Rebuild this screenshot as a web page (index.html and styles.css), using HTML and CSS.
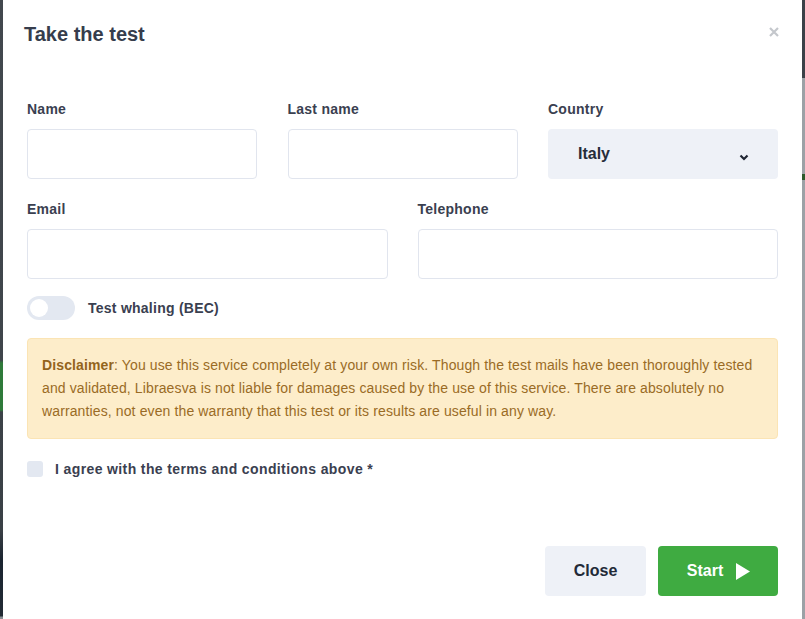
FILE: index.html
```html
<!DOCTYPE html>
<html lang="en">
<head>
<meta charset="utf-8">
<title>Take the test</title>
<link rel="stylesheet" href="styles.css">
</head>
<body>
<div class="backdrop">
  <div class="modal">
    <div class="modal-header">
      <h2 class="modal-title">Take the test</h2>
      <button class="modal-close" type="button" aria-label="Close">
        <svg width="10" height="10" viewBox="0 0 10 10"><path d="M1 1 L9 9 M9 1 L1 9" stroke="#c4c7cc" stroke-width="2.2" stroke-linecap="butt"/></svg>
      </button>
    </div>
    <form class="modal-body">
      <div class="row row-3">
        <div class="field">
          <label class="label">Name</label>
          <input class="input" type="text">
        </div>
        <div class="field">
          <label class="label">Last name</label>
          <input class="input" type="text">
        </div>
        <div class="field">
          <label class="label">Country</label>
          <div class="select">
            <span class="select-value">Italy</span>
            <svg class="chevron" width="10" height="7" viewBox="0 0 10 7"><path d="M1.5 1.5 L5 5 L8.5 1.5" fill="none" stroke="#1f2633" stroke-width="2.2"/></svg>
          </div>
        </div>
      </div>
      <div class="row row-2">
        <div class="field">
          <label class="label">Email</label>
          <input class="input" type="text">
        </div>
        <div class="field">
          <label class="label">Telephone</label>
          <input class="input" type="text">
        </div>
      </div>
      <div class="toggle-row">
        <span class="toggle"><span class="knob"></span></span>
        <span class="label">Test whaling (BEC)</span>
      </div>
      <div class="alert">
        <strong>Disclaimer</strong>: You use this service completely at your own risk. Though the test mails have been thoroughly tested and validated, Libraesva is not liable for damages caused by the use of this service. There are absolutely no warranties, not even the warranty that this test or its results are useful in any way.
      </div>
      <div class="check-row">
        <span class="checkbox"></span>
        <span class="label label-wide">I agree with the terms and conditions above *</span>
      </div>
      <div class="actions">
        <button class="btn btn-light" type="button">Close</button>
        <button class="btn btn-green" type="button">Start
          <svg width="14" height="17" viewBox="0 0 14 17"><path d="M0 0 L14 8.5 L0 17 Z" fill="#fff"/></svg>
        </button>
      </div>
    </form>
  </div>
</div>
</body>
</html>
```

FILE: styles.css
```css
html, body {
  margin: 0;
  padding: 0;
  height: 100%;
}

body {
  font-family: "Liberation Sans", Arial, sans-serif;
  background: #3d4349;
}

/* page dimmed behind the dialog: thin slivers visible on both sides */
.backdrop {
  min-height: 100%;
  display: flex;
  padding: 0 3px;
  box-sizing: border-box;
  background:
    linear-gradient(to bottom, #3b4148 0, #3b4148 78px, #9ca1a6 78px, #9ca1a6 174px, #2f5a2c 174px, #2f5a2c 180px, #9ca1a6 180px) right top / 3px 100% no-repeat,
    linear-gradient(to bottom, #42484e 0, #3f454b 360px, #2f7a3a 363px, #2f7a3a 410px, #3c4248 412px, #3a4046 530px, #1a2430 560px, #222b35 616px, #8a8f94 617px) left top / 3px 100% no-repeat,
    #3d4349;
}

.modal {
  flex: 1;
  min-width: 0;
  background: #fff;
  min-height: 619px;
}

.modal-header {
  display: flex;
  align-items: center;
  justify-content: space-between;
  padding: 22px 23px 0 21px;
}

.modal-title {
  margin: 0;
  font-size: 20px;
  line-height: 24px;
  font-weight: 700;
  color: #363d4c;
}

.modal-close {
  border: 0;
  background: none;
  padding: 0;
  margin-top: -5px;
  line-height: 0;
  cursor: pointer;
}

.modal-body {
  padding: 55px 24px 0 24px;
  margin: 0;
}

.row {
  display: grid;
}

.row-3 {
  grid-template-columns: minmax(0, 1fr) minmax(0, 1fr) minmax(0, 1fr);
  column-gap: 30.5px;
}

.row-2 {
  grid-template-columns: minmax(0, 1fr) minmax(0, 1fr);
  margin-top: 22px;
  column-gap: 30px;
}

.field {
  display: flex;
  flex-direction: column;
  min-width: 0;
}

.label {
  font-size: 14px;
  line-height: 16px;
  font-weight: 700;
  color: #3a4050;
  letter-spacing: 0.25px;
}

.label-wide {
  letter-spacing: 0.38px;
}

.field .label {
  margin-bottom: 12px;
}

.input {
  width: 100%;
  min-width: 0;
  height: 50px;
  box-sizing: border-box;
  border: 1px solid #e1e5ee;
  border-radius: 4px;
  background: #fff;
  margin: 0;
  padding: 0 12px;
  font: inherit;
}

.select {
  height: 50px;
  box-sizing: border-box;
  border-radius: 4px;
  background: #eef1f7;
  display: flex;
  align-items: center;
  justify-content: space-between;
  padding: 0 29px 0 30px;
}

.select-value {
  font-size: 16px;
  font-weight: 700;
  color: #262d3a;
  margin-top: 0;
}

.chevron {
  margin-top: 7px;
}

.toggle-row {
  display: flex;
  align-items: center;
  gap: 13px;
  margin-top: 17px;
}

.toggle {
  width: 48px;
  height: 24px;
  border-radius: 12px;
  background: #e3e8f1;
  display: flex;
  align-items: center;
  padding: 0 3px;
  box-sizing: border-box;
}

.knob {
  width: 18px;
  height: 18px;
  border-radius: 50%;
  background: #fff;
}

.alert {
  margin-top: 18px;
  background: #fdedca;
  border: 1px solid #fbe4b4;
  border-radius: 4px;
  padding: 15px 14px 15px 14px;
  font-size: 14px;
  line-height: 23px;
  letter-spacing: 0.12px;
  color: #9a6b25;
}

.alert strong {
  font-weight: 700;
  color: #93641c;
}

.check-row {
  display: flex;
  align-items: center;
  gap: 12px;
  margin-top: 22px;
}

.checkbox {
  width: 16px;
  height: 16px;
  border-radius: 3px;
  background: #e3e8f1;
}

.actions {
  display: flex;
  justify-content: flex-end;
  gap: 12px;
  margin-top: 69px;
}

.btn {
  height: 50px;
  border: 0;
  border-radius: 4px;
  font-family: inherit;
  font-size: 16px;
  font-weight: 700;
  display: flex;
  align-items: center;
  justify-content: center;
  gap: 12px;
  cursor: pointer;
}

.btn-light {
  width: 101px;
  background: #eef1f7;
  color: #222a37;
}

.btn-green {
  width: 120px;
  padding-left: 7px;
  gap: 13px;
  background: #3fab41;
  color: #fff;
}
```
